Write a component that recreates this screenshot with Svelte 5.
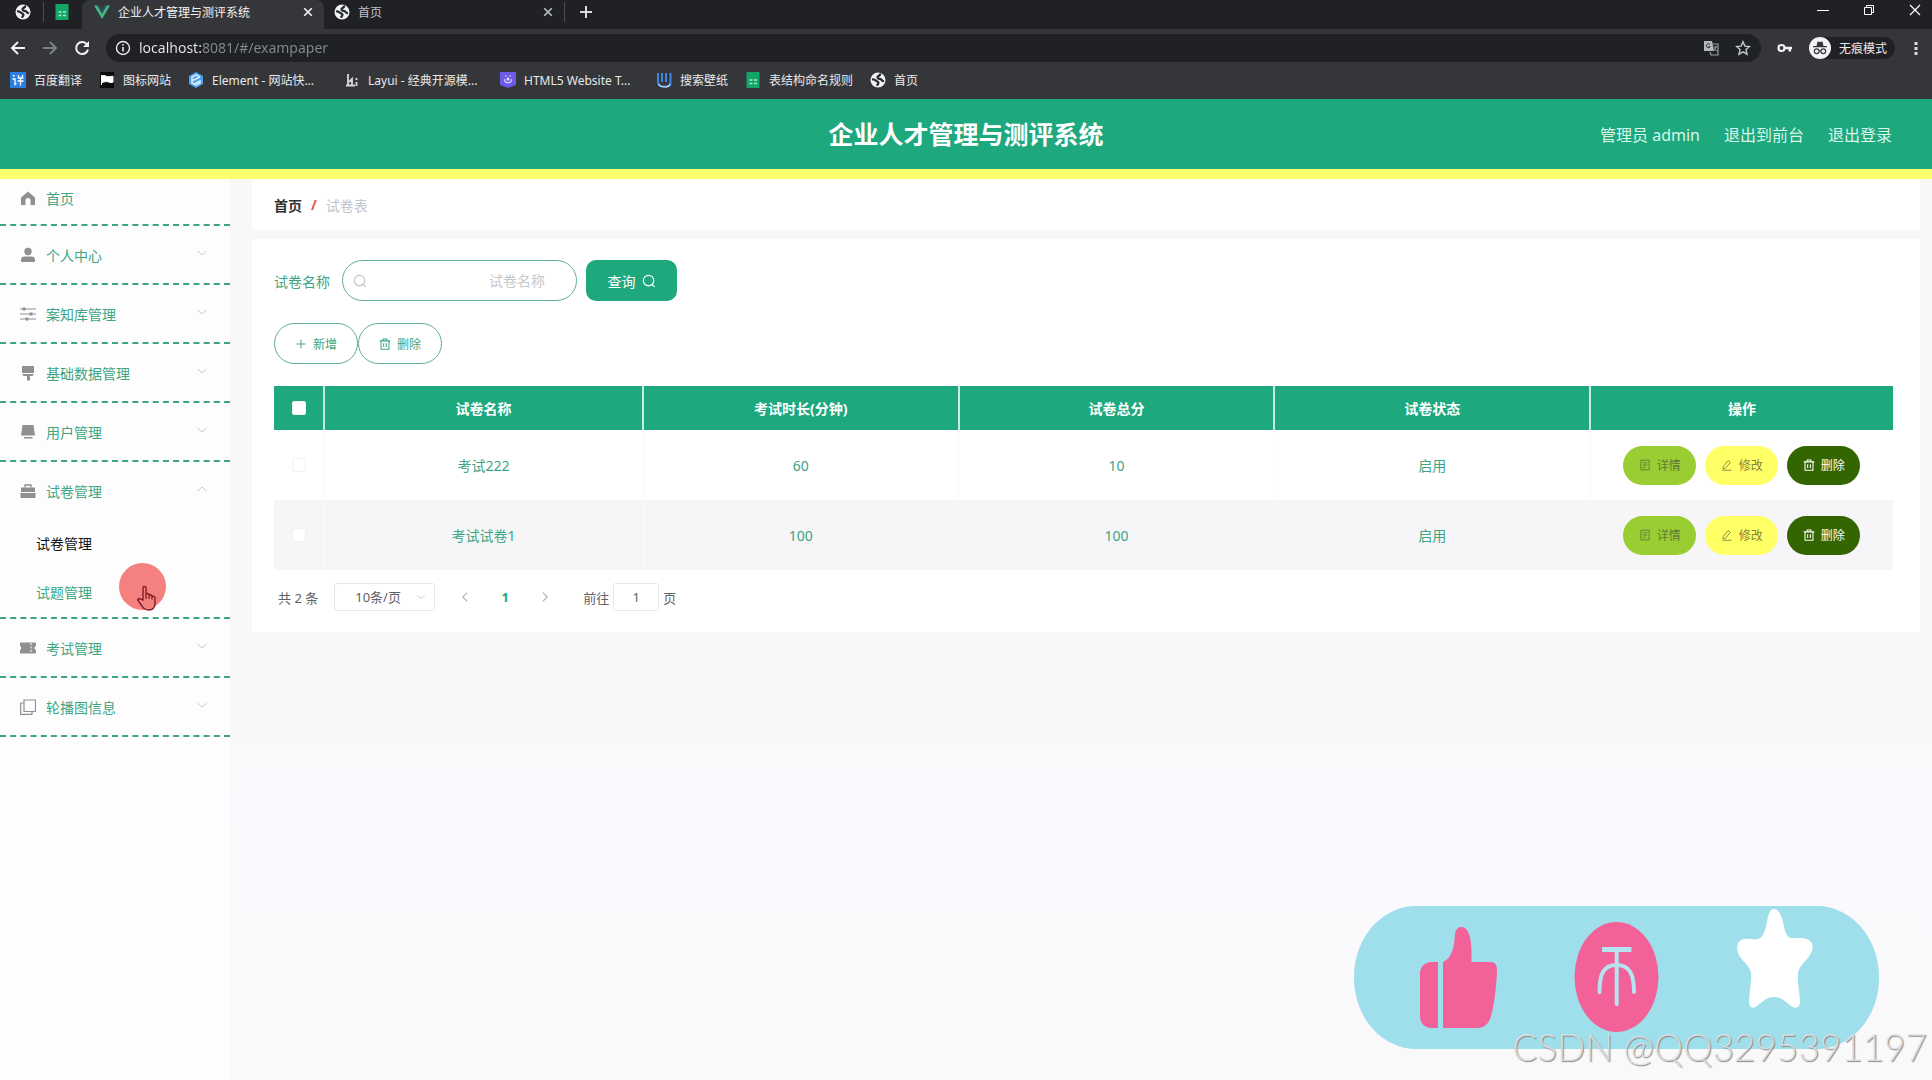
<script lang="ts">
  type Menu = { icon: string; label: string; arrow?: 'down' | 'up'; children?: string[] }

  const title = '企业人才管理与测评系统'

  const bookmarks = [
    { icon: 'fanyi', label: '百度翻译' },
    { icon: 'flag', label: '图标网站' },
    { icon: 'element', label: 'Element - 网站快...', wide: true },
    { icon: 'layui', label: 'Layui - 经典开源模...', wide: true },
    { icon: 'html5', label: 'HTML5 Website T...', wide: true },
    { icon: 'wall', label: '搜索壁纸' },
    { icon: 'sheet', label: '表结构命名规则' },
    { icon: 'globe', label: '首页' },
  ]

  const menus: Menu[] = [
    { icon: 'home', label: '首页' },
    { icon: 'user', label: '个人中心', arrow: 'down' },
    { icon: 'sliders', label: '案知库管理', arrow: 'down' },
    { icon: 'brush', label: '基础数据管理', arrow: 'down' },
    { icon: 'screen', label: '用户管理', arrow: 'down' },
    { icon: 'case', label: '试卷管理', arrow: 'up', children: ['试卷管理', '试题管理'] },
    { icon: 'ticket', label: '考试管理', arrow: 'down' },
    { icon: 'copy', label: '轮播图信息', arrow: 'down' },
  ]

  const columns = ['试卷名称', '考试时长(分钟)', '试卷总分', '试卷状态']

  const papers = [
    { name: '考试222', minutes: 60, score: 10, status: '启用' },
    { name: '考试试卷1', minutes: 100, score: 100, status: '启用' },
  ]

  let keyword = $state('')
  let url = $state('localhost:8081/#/exampaper')
  let page = $state('1')
</script>

{#snippet favicon(name: string)}
  <svg class="fav" viewBox="0 0 16 16" aria-hidden="true">
    {#if name === 'globe'}
      <circle cx="8" cy="8" r="7.500" fill="#f1f3f4" />
      <path d="M2 7.500c2-.5 3 .3 4 1.300s2.500.7 2.500 2-1.200 1.500-1.500 3M10 1.500c.5 1.500-.5 2-1.500 2.500s-1.500 1.500-.5 2.300 2.500.2 3.300 1.200.7 2 2.700 1.500" fill="none" stroke="#26282b" stroke-width="2.200" />
    {:else if name === 'sheet'}
      <path d="M1.500 0h13v16h-13z" fill="#12a668" />
      <path d="M4.500 8h3M9 8h3M4.500 11.500h3M9 11.500h3" stroke="#a9e6c9" stroke-width="1.500" />
    {:else if name === 'vue'}
      <path d="M0 1.500h3.500L8 9.500l4.500-8H16L8 15z" fill="#41b883" />
      <path d="M3.500 1.500h2.700L8 4.800l1.800-3.300h2.700L8 9.500z" fill="#34495e" />
    {:else if name === 'fanyi'}
      <path d="M0 0h16v16H0z" fill="#2a7de1" />
      <path d="M3 3l1.500 1.500M2.500 7H5v5.500l1.500-1M8 3l1 2M13 3l-1 2M7.500 6h6M7.500 9h6M10.500 6v7.500" fill="none" stroke="#fff" stroke-width="1.300" />
    {:else if name === 'flag'}
      <path d="M1 0h14v16H1z" fill="#0b0b0b" />
      <path d="M2.500 3v10M3 4c3-1.500 4 .8 6 .8s3-.6 5-.6v6c-3 1.300-4-.6-6-.6s-3 .3-5 .9z" fill="#fff" stroke="#fff" />
    {:else if name === 'element'}
      <path d="M8 0l7 4v8l-7 4-7-4V4z" fill="#4c9ef0" />
      <path d="M12 5L8 2.800 4 5v6l4 2.200L12 11V9l-6 3M4.500 8.500L12 5" fill="none" stroke="#d7ebff" stroke-width="1.500" />
    {:else if name === 'layui'}
      <path d="M4 2v11M2 13.500h9M5 10l3-3v6" fill="none" stroke="#d8d8d8" stroke-width="1.800" />
      <path d="M12.500 6v2M12.500 10v4" stroke="#d8d8d8" stroke-width="1.800" />
    {:else if name === 'html5'}
      <path d="M0 0h16v13l-8 3-8-3z" fill="#6a5be8" />
      <path d="M5 4h1.500M9.500 4H11M4.500 7c0 5 7 5 7 0" fill="none" stroke="#c4bdff" stroke-width="1.500" />
      <circle cx="8" cy="7" r="1.500" fill="#e6e2ff" />
    {:else if name === 'wall'}
      <path d="M2 1v8c0 4 2 5.500 5 5.500h4c2.500 0 3.500-2 3.500-4V1M6 1v9M10 1v9" fill="none" stroke="#3f86e0" stroke-width="2" />
      <path d="M2.500 12c1.500 2.500 3 3 6 3s4.500-.5 5.500-3" fill="none" stroke="#cfe0f5" stroke-width="1.200" />
    {/if}
  </svg>
{/snippet}

{#snippet icon(name: string)}
  <svg class="icon" viewBox="0 0 16 16" aria-hidden="true">
    {#if name === 'home'}
      <path d="M8 1.500L1 7.500V15h4.500v-4.500a2.500 2.500 0 0 1 5 0V15H15V7.500z" fill="currentColor" />
    {:else if name === 'user'}
      <circle cx="8" cy="4.500" r="3.700" fill="currentColor" />
      <path d="M1 15v-2.500C1 10.500 2.500 9.500 4.500 9.500h7c2 0 3.500 1 3.500 3V15z" fill="currentColor" />
    {:else if name === 'sliders'}
      <path d="M0 3h16M0 8h16M0 13h16" stroke="currentColor" />
      <path d="M4 1.500v3M11 6.500v3M7 11.500v3" stroke="currentColor" stroke-width="3" />
    {:else if name === 'brush'}
      <path d="M2 1h12v7H2zM2 9h12l-1.500 2H10v4.500H7V11H3.500z" fill="currentColor" />
    {:else if name === 'screen'}
      <path d="M2.500 1h11L15 11.500H1zM4 13h8.500v1.500H4z" fill="currentColor" />
    {:else if name === 'case'}
      <path d="M5 4.500V2h6v2.500" fill="none" stroke="currentColor" stroke-width="1.300" />
      <path d="M1 4.500h14V9H1zM.500 10h15v5H.500z" fill="currentColor" />
    {:else if name === 'ticket'}
      <path d="M0 2.500h16V6c-2 .5-2 3.500 0 4v3.500H0V10c1.500-.5 1.500-3.500 0-4z" fill="currentColor" />
      <path d="M11 3v10" stroke="#fff" stroke-dasharray="2 1.500" />
    {:else if name === 'copy'}
      <path d="M4 1h11.500v11.500H4zM4 4H.700v11.400H12v-2.900" fill="none" stroke="currentColor" stroke-width="1.200" />
    {:else if name === 'search'}
      <circle cx="7.500" cy="7.500" r="6" fill="none" stroke="currentColor" stroke-width="1.300" />
      <path d="M11.500 12l3 2.800" stroke="currentColor" stroke-width="1.300" />
    {:else if name === 'plus'}
      <path d="M8 2v12M2 8h12" stroke="currentColor" stroke-width="1.300" />
    {:else if name === 'trash'}
      <path d="M1 3.800h14M5.500 3.500V1.300h5v2.200M2.700 4v11h10.600V4M6.200 7v5M9.800 7v5" fill="none" stroke="currentColor" stroke-width="1.400" />
    {:else if name === 'doc'}
      <path d="M2.500 1.500h11v13h-11zM5 5h6M5 8h6M5 11h4" fill="none" stroke="currentColor" stroke-width="1.200" />
    {:else if name === 'edit'}
      <path d="M3 10l6.500-8 3 2.300L6 12.300l-3.500 1zM2 15h12" fill="none" stroke="currentColor" stroke-width="1.200" />
    {:else if name === 'down'}
      <path d="M2 5.500l6 5 6-5" fill="none" stroke="currentColor" stroke-width="1.300" />
    {:else if name === 'up'}
      <path d="M2 10.500l6-5 6 5" fill="none" stroke="currentColor" stroke-width="1.300" />
    {:else if name === 'left'}
      <path d="M10.500 3l-5 5 5 5" fill="none" stroke="currentColor" stroke-width="1.500" />
    {:else if name === 'right'}
      <path d="M5.500 3l5 5-5 5" fill="none" stroke="currentColor" stroke-width="1.500" />
    {:else if name === 'close'}
      <path d="M3 3l10 10M13 3L3 13" stroke="currentColor" stroke-width="2.200" />
    {/if}
  </svg>
{/snippet}

<div class="app">
  <div class="browser">
    <div class="tabs">
      <button class="tab pinned" aria-label="首页">{@render favicon('globe')}</button>
      <span class="divider"></span>
      <button class="tab pinned" aria-label="表结构命名规则">{@render favicon('sheet')}</button>
      <div class="tab active">
        {@render favicon('vue')}
        <span class="tab-title">{title}</span>
        <button class="plain" aria-label="关闭">{@render icon('close')}</button>
      </div>
      <div class="tab">
        {@render favicon('globe')}
        <span class="tab-title">首页</span>
        <button class="plain" aria-label="关闭">{@render icon('close')}</button>
      </div>
      <span class="divider"></span>
      <button class="plain new-tab" aria-label="新标签页">
        <svg width="14" height="14" viewBox="0 0 14 14"><path d="M7 1v12M1 7h12" stroke="#dadce0" stroke-width="2" /></svg>
      </button>
      <div class="window">
        <button class="plain" aria-label="最小化">
          <svg width="12" height="12" viewBox="0 0 12 12"><path d="M0 6.500h12" stroke="#fff" /></svg>
        </button>
        <button class="plain" aria-label="还原">
          <svg width="12" height="12" viewBox="0 0 12 12"><path d="M1.500 3.500h7v7h-7zM3.500 3V1.500h7v7H9" fill="none" stroke="#fff" /></svg>
        </button>
        <button class="plain" aria-label="关闭窗口">
          <svg width="12" height="12" viewBox="0 0 12 12"><path d="M1 1l10 10M11 1L1 11" stroke="#fff" stroke-width="1.200" /></svg>
        </button>
      </div>
    </div>

    <div class="toolbar">
      <button class="plain" aria-label="后退">
        <svg width="16" height="16" viewBox="0 0 16 16"><path d="M15 8H2.500M8 2L2 8l6 6" fill="none" stroke="#f1f3f4" stroke-width="2" /></svg>
      </button>
      <button class="plain" aria-label="前进">
        <svg width="16" height="16" viewBox="0 0 16 16"><path d="M1 8h12.500M8 2l6 6-6 6" fill="none" stroke="#7d8084" stroke-width="2" /></svg>
      </button>
      <button class="plain" aria-label="刷新">
        <svg width="16" height="16" viewBox="0 0 16 16"><path d="M13 4.500A6 6 0 1 0 14 9.500" fill="none" stroke="#f1f3f4" stroke-width="2" /><path d="M15 1v6H9z" fill="#f1f3f4" /></svg>
      </button>
      <div class="address">
        <svg width="16" height="16" viewBox="0 0 16 16"><circle cx="8" cy="8" r="6.500" fill="none" stroke="#e8eaed" stroke-width="1.400" /><path d="M8 7v4.500M8 4v1.600" stroke="#e8eaed" stroke-width="1.600" /></svg>
        <input class="url" aria-label="地址" bind:value={url} />
        <svg width="16" height="16" viewBox="0 0 16 16"><path d="M1 1h8l2 10H1z" fill="#b5b8bb" /><path d="M9 4h6v11H8l-1-3" fill="none" stroke="#9a9da1" stroke-width="1.200" /><path d="M7 4.500a2 2 0 1 0 .2 2H5.500" fill="none" stroke="#303134" /><path d="M10.500 7h4M12.500 6v1c0 2-1 3-2 4M11.500 8.500l2.500 3" fill="none" stroke="#9a9da1" /></svg>
        <svg width="16" height="16" viewBox="0 0 16 16"><path d="M8 1.800l1.900 4.300 4.600.4-3.500 3.100 1 4.600-4-2.400-4 2.400 1-4.600L1.500 6.500l4.600-.4z" fill="none" stroke="#c4c7ca" stroke-width="1.400" /></svg>
      </div>
      <svg width="16" height="16" viewBox="0 0 16 16"><circle cx="4.500" cy="8" r="3" fill="none" stroke="#f1f3f4" stroke-width="2.200" /><path d="M7 8h8M12.800 8v3.500" stroke="#f1f3f4" stroke-width="2.600" /></svg>
      <div class="incognito">
        <svg width="22" height="22" viewBox="0 0 22 22"><circle cx="11" cy="11" r="11" fill="#f1f3f4" /><path d="M7.500 9l1-4.500 2.500.6 2.500-.6 1 4.500zM4 9h14v1.300H4z" fill="#35363a" /><circle cx="7.700" cy="14.200" r="2.400" fill="none" stroke="#35363a" stroke-width="1.200" /><circle cx="14.300" cy="14.200" r="2.400" fill="none" stroke="#35363a" stroke-width="1.200" /><path d="M10 14q1-.8 2 0" fill="none" stroke="#35363a" /></svg>
        <span>无痕模式</span>
      </div>
      <button class="plain" aria-label="更多">
        <svg width="16" height="16" viewBox="0 0 16 16"><path d="M6.500 2h3v3h-3zM6.500 7h3v3h-3zM6.500 12h3v3h-3z" fill="#dadce0" /></svg>
      </button>
    </div>

    <nav class="bookmarks">
      {#each bookmarks as item}
        <a href="#/" class:wide={item.wide}>{@render favicon(item.icon)}<span>{item.label}</span></a>
      {/each}
    </nav>
  </div>

  <header class="header">
    <h1>{title}</h1>
    <div class="account">
      <span>管理员 admin</span>
      <a href="#/front">退出到前台</a>
      <a href="#/login">退出登录</a>
    </div>
  </header>

  <div class="body">
    <aside class="sidebar">
      {#each menus as menu, i}
        <div class="group">
          <button class="menu" class:first={i === 0}>
            {@render icon(menu.icon)}
            <span>{menu.label}</span>
            {#if menu.arrow}
              <i class="arrow">{@render icon(menu.arrow)}</i>
            {/if}
          </button>
          {#if menu.children}
            {#each menu.children as child, j}
              <a class="sub" class:current={j === 0} href="#/exampaper">{child}</a>
            {/each}
            <div class="pointer">
              <svg width="20" height="26" viewBox="0 0 20 26"><path d="M6 15V3c0-2 3-2 3 0v7c0-2 3-2 3 0v1c0-1.800 3-1.600 3 .3v.9c0-1.500 3-1.300 3 .6V18c0 4-2 7-6.500 7-3.500 0-5-1.500-6.500-4l-4-5.500c-.8-1.500.8-2.500 2-1.500z" fill="#f58080" stroke="#7c1d24" stroke-width="1.400" /><path d="M9 10v4M12 11v3M15 12v2.500" stroke="#7c1d24" stroke-width="1.200" /></svg>
            </div>
          {/if}
        </div>
      {/each}
    </aside>

    <main class="main">
      <nav class="card crumb">
        <b>首页</b><i>/</i><span>试卷表</span>
      </nav>

      <section class="card content">
        <form class="search">
          <label for="keyword">试卷名称</label>
          <div class="field">
            {@render icon('search')}
            <input id="keyword" placeholder="试卷名称" bind:value={keyword} />
          </div>
          <button type="button" class="query">查询 {@render icon('search')}</button>
        </form>

        <div class="actions">
          <button class="round">{@render icon('plus')}新增</button>
          <button class="round">{@render icon('trash')}删除</button>
        </div>

        <table>
          <colgroup>
            <col class="col-check" />
            <col class="col-name" />
            <col /><col /><col />
            <col class="col-ops" />
          </colgroup>
          <thead>
            <tr>
              <th><input type="checkbox" aria-label="全选" /></th>
              {#each columns as col}
                <th>{col}</th>
              {/each}
              <th>操作</th>
            </tr>
          </thead>
          <tbody>
            {#each papers as paper}
              <tr>
                <td><input type="checkbox" aria-label={paper.name} /></td>
                <td>{paper.name}</td>
                <td>{paper.minutes}</td>
                <td>{paper.score}</td>
                <td>{paper.status}</td>
                <td>
                  <div class="ops">
                    <button class="op detail">{@render icon('doc')}详情</button>
                    <button class="op edit">{@render icon('edit')}修改</button>
                    <button class="op del">{@render icon('trash')}删除</button>
                  </div>
                </td>
              </tr>
            {/each}
          </tbody>
        </table>

        <div class="pager">
          <span>共 2 条</span>
          <div class="size">
            <select aria-label="每页条数">
              <option>10条/页</option>
              <option>20条/页</option>
            </select>
            {@render icon('down')}
          </div>
          <button class="plain step" aria-label="上一页">{@render icon('left')}</button>
          <button class="plain step on">1</button>
          <button class="plain step" aria-label="下一页">{@render icon('right')}</button>
          <label class="jump">前往 <input bind:value={page} /> 页</label>
        </div>
      </section>
    </main>
  </div>

  <div class="sticker">
    <svg viewBox="0 0 525 143" aria-hidden="true">
      <rect width="525" height="143" rx="62" ry="71" fill="#9fdeeb" />
      <path d="M84 56h-6c-8 0-12 5-12 12v42c0 8 5 12 12 12h6z" fill="#f26298" />
      <path d="M89 56c9-4 11-14 12-28 1-9 10-9 13-2 4 8 3.500 18 3.500 30H137c4 0 6 3 6 8-.5 14-2 32-6 46-2 8-7 12-14 12H89z" fill="#f26298" />
      <ellipse cx="262.500" cy="71" rx="42" ry="55" fill="#f26298" />
      <path d="M248 43.500h29.500" stroke="#b5e3ef" stroke-width="5" />
      <path d="M262.700 44v54M245.500 86c0-18 4-27 17-27s17.500 9 17.500 27" fill="none" stroke="#b5e3ef" stroke-width="4" stroke-linecap="round" />
      <path d="M420 3c5 0 7 6 9 13 2 9 3 15 8 16 6 1 9-1 15 1 7 2 8 8 5 14-3 7-12 12-13 20-1 9 2 20 2 29 0 6-5 7-9 4-6-5-10-9-17-9s-11 4-17 9c-4 3-8 2-8-4 0-10 3-20 2-29-1-8-10-12-13-20-2-7-1-12 6-14 5-1 9 1 14 0s7-8 9-17c1-7 3-13 7-13z" fill="#fff" />
    </svg>
  </div>
  <div class="watermark">CSDN @QQ3295391197</div>
</div>

<style>
  :global(body) {
    background: #fdfdfd;
  }

  .app {
    position: relative;
    display: flex;
    flex-direction: column;
    min-height: 100vh;
    font-family: 'Noto Sans', 'Noto Sans CJK SC', sans-serif;
    font-size: 14px;
    color: #3da583;
  }

  .app * {
    box-sizing: border-box;
  }

  button,
  input,
  select {
    font: inherit;
    color: inherit;
    margin: 0;
  }

  button {
    cursor: pointer;
  }

  a {
    color: inherit;
    text-decoration: none;
  }

  i {
    font-style: normal;
  }

  svg {
    flex: none;
    display: block;
  }

  .icon,
  .fav {
    width: 16px;
    height: 16px;
  }

  .plain {
    display: flex;
    align-items: center;
    justify-content: center;
    padding: 0;
    border: 0;
    background: none;
  }

  /* browser frame */
  .browser {
    height: 99px;
    background: #35363a;
    color: #e8eaed;
    font-size: 12px;
  }

  .tabs {
    display: flex;
    align-items: center;
    height: 29px;
    padding-left: 5px;
    padding-bottom: 5px;
    background: #202124;
  }

  .tab {
    display: flex;
    align-items: center;
    gap: 8px;
    width: 240px;
    height: 24px;
    padding: 0 10px;
    border: 0;
    background: none;
    color: #bdc1c6;
  }

  .tab.pinned {
    width: 38px;
  }

  .tab.active {
    height: 29px;
    width: 242px;
    margin-bottom: -5px;
    padding-bottom: 5px;
    padding-left: 12px;
    border-radius: 8px 8px 0 0;
    background: #35363a;
    color: #f1f3f4;
  }

  .tab-title {
    flex: 1;
    white-space: nowrap;
  }

  .tab .icon {
    width: 12px;
    height: 12px;
  }

  .divider {
    width: 1px;
    height: 20px;
    background: #4a4c50;
  }

  .new-tab {
    width: 42px;
  }

  .window {
    display: flex;
    gap: 34px;
    margin-left: auto;
    padding: 0 11px 4px;
  }

  .toolbar {
    display: flex;
    align-items: center;
    gap: 16px;
    height: 37px;
    padding: 0 8px 0 10px;
  }

  .address {
    flex: 1;
    display: flex;
    align-items: center;
    gap: 16px;
    height: 28px;
    padding: 0 10px 0 9px;
    border-radius: 14px;
    background: #202124;
  }

  .url {
    flex: 1;
    padding: 0;
    margin-left: -8px;
    border: 0;
    outline: 0;
    font-size: 14px;
    color: transparent;
    background: linear-gradient(90deg, #e8eaed 62px, #85898e 62px);
    background-clip: text;
  }

  .incognito {
    display: flex;
    align-items: center;
    gap: 8px;
    padding-right: 8px;
    border-radius: 11px;
    background: #202124;
    margin-right: -3px;
  }

  .bookmarks {
    display: flex;
    align-items: center;
    gap: 17px;
    height: 28px;
    padding-left: 10px;
  }

  .bookmarks a {
    display: flex;
    align-items: center;
    gap: 8px;
    white-space: nowrap;
  }

  .bookmarks .wide {
    width: 139px;
  }

  /* page header */
  .header {
    display: grid;
    grid-template-columns: 1fr auto 1fr;
    align-items: center;
    height: 80px;
    border-bottom: 10px solid #fdff6e;
    background: #1da87e;
    color: #fff;
  }

  h1 {
    grid-column: 2;
    margin: 0;
    font-size: 25px;
    line-height: 32px;
  }

  .account {
    display: flex;
    justify-content: flex-end;
    gap: 24px;
    padding-right: 40px;
    font-size: 16px;
    color: #d9f5ea;
  }

  .body {
    flex: 1;
    display: flex;
  }

  /* sidebar */
  .sidebar {
    width: 230px;
    flex: none;
    background: #fdfdfd;
  }

  .group {
    position: relative;
    border-bottom: 2px dashed #3da583;
  }

  .menu {
    display: flex;
    align-items: center;
    gap: 10px;
    width: 100%;
    height: 57px;
    padding: 0 22px 0 20px;
    border: 0;
    background: none;
  }

  .menu.first {
    height: 45px;
    padding-bottom: 8px;
  }

  .menu > :global(.icon) {
    color: #909090;
  }

  .arrow {
    margin-left: auto;
    margin-bottom: 4px;
    color: #c4c8c6;
  }

  .arrow .icon {
    width: 12px;
    height: 12px;
  }

  .sub {
    display: block;
    height: 49px;
    padding-left: 36px;
    line-height: 49px;
  }

  .sub.current {
    color: #111;
  }

  .pointer {
    position: absolute;
    left: 119px;
    bottom: 7px;
    width: 47px;
    height: 47px;
    border-radius: 50%;
    background: #f58080;
  }

  .pointer svg {
    margin: 22px 0 0 18px;
  }

  /* content */
  .main {
    flex: 1;
    min-width: 0;
    padding: 0 12px 0 22px;
    background: linear-gradient(#f7f8f7 0, #f7f8f7 460px, #faf9fd 620px, #faf9fc 780px, #f9f9f9 100%);
  }

  .card {
    background: #fff;
  }

  .crumb {
    display: flex;
    align-items: center;
    gap: 9px;
    height: 51px;
    padding: 0 22px;
  }

  .crumb b {
    color: #303133;
  }

  .crumb i {
    color: #f04a4a;
    font-weight: bold;
  }

  .crumb span {
    color: #c0c4cc;
  }

  .content {
    margin-top: 9px;
    padding: 21px 27px 21px 22px;
  }

  .search {
    display: flex;
    align-items: center;
  }

  .field {
    display: flex;
    align-items: center;
    width: 235px;
    height: 41px;
    margin: 0 9px 0 12px;
    padding: 0 31px 0 10px;
    border: 1px solid #5fae93;
    border-radius: 21px;
    color: #c0c4cc;
  }

  .field input {
    flex: 1;
    min-width: 0;
    padding: 0;
    border: 0;
    outline: 0;
    background: none;
    text-align: right;
  }

  .field input::placeholder {
    color: #c4c8cc;
  }

  .query {
    display: flex;
    align-items: center;
    justify-content: center;
    gap: 6px;
    width: 91px;
    height: 41px;
    border: 0;
    border-radius: 10px;
    background: #1da87e;
    color: #fff;
  }

  .query .icon,
  .field .icon {
    width: 14px;
    height: 14px;
  }

  .actions {
    display: flex;
    margin: 22px 0;
  }

  .round {
    display: flex;
    align-items: center;
    justify-content: center;
    gap: 6px;
    width: 84px;
    height: 41px;
    padding: 0;
    border: 1px solid #5fae93;
    border-radius: 21px;
    background: #fff;
    font-size: 12px;
  }

  .round .icon,
  .op .icon {
    width: 12px;
    height: 12px;
  }

  table {
    width: 100%;
    table-layout: fixed;
    border-collapse: collapse;
  }

  .col-check {
    width: 50px;
  }

  .col-name {
    width: 319px;
  }

  .col-ops {
    width: 303px;
  }

  th {
    height: 44px;
    padding: 0;
    background: #1da87e;
    color: #fff;
  }

  th + th {
    border-left: 2px solid #c9eadf;
  }

  td {
    height: 70px;
    padding: 0;
    text-align: center;
  }

  td + td {
    border-left: 1px solid #fafafa;
  }

  tbody tr:nth-child(2) {
    background: #f6f6f8;
  }

  input[type='checkbox'] {
    appearance: none;
    display: block;
    width: 14px;
    height: 14px;
    margin: 0 auto;
    border: 1px solid #f1f1f3;
    border-radius: 2px;
    background: #fff;
  }

  .ops {
    display: flex;
    justify-content: center;
    gap: 9px;
  }

  .op {
    display: flex;
    align-items: center;
    justify-content: center;
    gap: 6px;
    width: 73px;
    height: 39px;
    padding: 0;
    border: 0;
    border-radius: 20px;
    font-size: 12px;
  }

  .detail {
    background: #9acd32;
    color: #5c7a3a;
  }

  .edit {
    background: #ffff66;
    color: #85853c;
  }

  .del {
    background: #336600;
    color: #fff;
  }

  .pager {
    display: flex;
    align-items: center;
    margin-top: 13px;
    padding-left: 4px;
    font-size: 13px;
    color: #606266;
  }

  .size {
    display: flex;
    align-items: center;
    width: 101px;
    height: 28px;
    margin: 0 10px 0 16px;
    padding-right: 8px;
    border: 1px solid #e4e6ea;
    border-radius: 3px;
    color: #c0c4cc;
  }

  .size select {
    flex: 1;
    appearance: none;
    border: 0;
    outline: 0;
    padding: 0 0 0 20px;
    background: none;
    color: #606266;
  }

  .size .icon {
    width: 10px;
    height: 10px;
  }

  .step {
    width: 40px;
    height: 28px;
    color: #b4b8bf;
  }

  .step .icon {
    width: 14px;
    height: 14px;
  }

  .step.on {
    color: #1da87e;
    font-weight: bold;
  }

  .jump {
    display: flex;
    align-items: center;
    gap: 4px;
    margin-left: 18px;
  }

  .jump input {
    width: 46px;
    height: 28px;
    padding: 0;
    border: 1px solid #e4e6ea;
    border-radius: 3px;
    text-align: center;
  }

  /* overlays */
  .sticker {
    position: absolute;
    right: 53px;
    bottom: 31px;
    width: 525px;
  }

  .watermark {
    position: absolute;
    right: 5px;
    bottom: 6px;
    font-family: Lato, sans-serif;
    font-weight: 300;
    font-size: 37px;
    line-height: 54px;
    color: rgba(225, 228, 230, 0.85);
    text-shadow: 1px 1px 1px #888;
  }
</style>
